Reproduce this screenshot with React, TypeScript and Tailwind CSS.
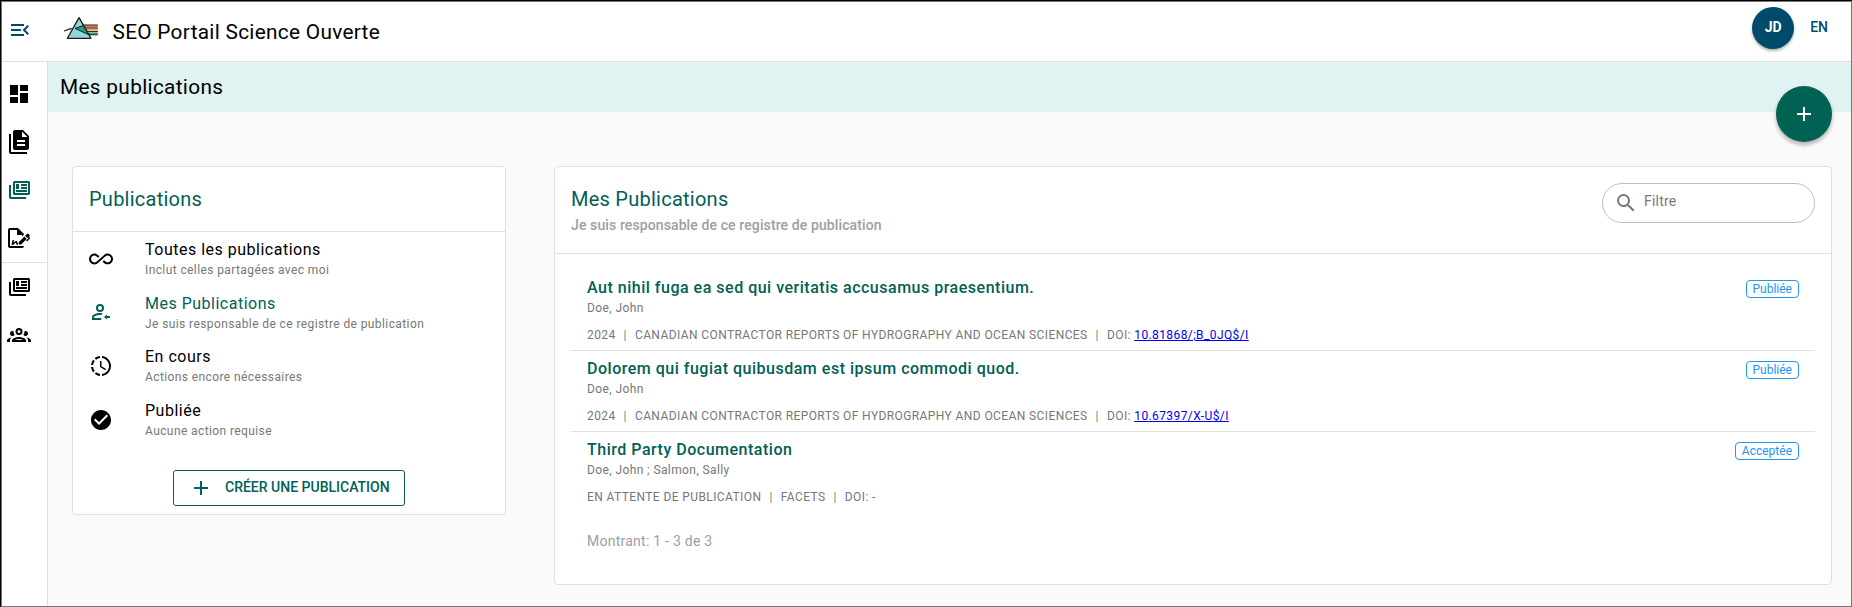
import React from "react";

const ICONS = {
  menuOpen: "M21,15.61L19.59,17L14.58,12L19.59,7L21,8.39L17.44,12L21,15.61M3,6H16V8H3V6M3,13V11H13V13H3M3,18V16H16V18H3Z",
  dashboard: "M13,3V9H21V3M13,21H21V11H13M3,21H11V15H3M3,13H11V3H3V13Z",
  documents: "M16 0H8C6.9 0 6 .9 6 2V18C6 19.1 6.9 20 8 20H20C21.1 20 22 19.1 22 18V6L16 0M18 16H10V14H18V16M18 12H10V10H18V12M15 7V1.5L20.5 7H15M4 4V22H20V24H4C2.9 24 2 23.1 2 22V4H4Z",
  newspaper: "M4 7V19H19V21H4C2 21 2 19 2 19V7H4M21 5V15H8V5H21M21.3 3H7.7C6.76 3 6 3.7 6 4.55V15.45C6 16.31 6.76 17 7.7 17H21.3C22.24 17 23 16.31 23 15.45V4.55C23 3.7 22.24 3 21.3 3M9 6H12V11H9V6M20 14H9V12H20V14M20 8H14V6H20V8M20 11H14V9H20V11Z",
  sign: "M19.7 12.9L14 18.6H11.7V16.3L17.4 10.6L19.7 12.9M23.1 12.1C23.1 12.4 22.8 12.7 22.5 13L20 15.5L19.1 14.6L21.7 12L21.1 11.4L20.4 12.1L18.1 9.8L20.3 7.7C20.5 7.5 20.9 7.5 21.2 7.7L22.6 9.1C22.8 9.3 22.8 9.7 22.6 10C22.4 10.2 22.2 10.4 22.2 10.6C22.2 10.8 22.4 11 22.6 11.2C22.9 11.5 23.2 11.8 23.1 12.1M3 20V4H10V9H15V10.5L17 8.5V8L11 2H3C1.9 2 1 2.9 1 4V20C1 21.1 1.9 22 3 22H15C16.1 22 17 21.1 17 20H3M11 17.1C10.8 17.1 10.6 17.2 10.5 17.2L10 15H8.5L6.4 16.7L7 14H5.5L4.5 19H6L8.9 16.4L9.5 18.7H10.5L11 18.6V17.1Z",
  group: "M12,5A3.5,3.5 0 0,0 8.5,8.5A3.5,3.5 0 0,0 12,12A3.5,3.5 0 0,0 15.5,8.5A3.5,3.5 0 0,0 12,5M12,7A1.5,1.5 0 0,1 13.5,8.5A1.5,1.5 0 0,1 12,10A1.5,1.5 0 0,1 10.5,8.5A1.5,1.5 0 0,1 12,7M5.5,8A2.5,2.5 0 0,0 3,10.5C3,11.44 3.53,12.25 4.29,12.68C4.65,12.88 5.06,13 5.5,13C5.94,13 6.35,12.88 6.71,12.68C7.08,12.47 7.39,12.17 7.62,11.81C6.89,10.86 6.5,9.7 6.5,8.5C6.5,8.41 6.5,8.31 6.5,8.22C6.2,8.08 5.86,8 5.5,8M18.5,8C18.14,8 17.8,8.08 17.5,8.22C17.5,8.31 17.5,8.41 17.5,8.5C17.5,9.7 17.11,10.86 16.38,11.81C16.5,12 16.63,12.15 16.78,12.3C16.94,12.45 17.1,12.58 17.29,12.68C17.65,12.88 18.06,13 18.5,13C18.94,13 19.35,12.88 19.71,12.68C20.47,12.25 21,11.44 21,10.5A2.5,2.5 0 0,0 18.5,8M12,14C9.66,14 5,15.17 5,17.5V19H19V17.5C19,15.17 14.34,14 12,14M4.71,14.55C2.78,14.78 0,15.76 0,17.5V19H3V17.07C3,16.06 3.69,15.22 4.71,14.55M19.29,14.55C20.31,15.22 21,16.06 21,17.07V19H24V17.5C24,15.76 21.22,14.78 19.29,14.55M12,16C13.53,16 15.24,16.5 16.23,17H7.77C8.76,16.5 10.47,16 12,16Z",
  infinity: "M18.6 6.62c-1.44 0-2.8.56-3.77 1.53L12 10.66 10.48 12h.01L7.8 14.39c-.64.64-1.49.99-2.4.99-1.87 0-3.39-1.51-3.39-3.38S3.53 8.62 5.4 8.62c.91 0 1.76.35 2.44 1.03l1.13 1 1.51-1.34L9.22 8.2C8.2 7.18 6.84 6.62 5.4 6.62 2.42 6.62 0 9.04 0 12s2.42 5.38 5.4 5.38c1.44 0 2.8-.56 3.77-1.53l2.83-2.5.01.01L13.52 12h-.01l2.69-2.39c.64-.64 1.49-.99 2.4-.99 1.87 0 3.39 1.51 3.39 3.38s-1.52 3.38-3.39 3.38c-.9 0-1.76-.35-2.44-1.03l-1.14-1.01-1.51 1.34 1.27 1.12c1.02 1.01 2.37 1.57 3.82 1.57 2.98 0 5.4-2.41 5.4-5.38s-2.42-5.37-5.4-5.37z",
  mine: "M11 4A4 4 0 0 0 7 8A4 4 0 0 0 11 12A4 4 0 0 0 15 8A4 4 0 0 0 11 4M11 6A2 2 0 0 1 13 8A2 2 0 0 1 11 10A2 2 0 0 1 9 8A2 2 0 0 1 11 6M11 13C8.33 13 3 14.33 3 17V20H12.5C12.2 19.4 12.1 18.75 12 18.1H4.9V17C4.9 16.36 8 14.9 11 14.9C11.5 14.9 12 14.95 12.5 15.03C12.8 14.4 13.1 13.85 13.6 13.34C12.6 13.1 11.7 13 11 13M18 14.5L15 17L18 19.5V18H21V16H18V14.5Z",
  clock: "M13,2.03V2.05L13,4.05C17.39,4.59 20.5,8.58 19.96,12.97C19.5,16.61 16.64,19.5 13,19.93V21.93C18.5,21.38 22.5,16.5 21.95,11C21.5,6.25 17.73,2.5 13,2.03M11,2.06C9.05,2.25 7.19,3 5.67,4.26L7.1,5.74C8.22,4.84 9.57,4.26 11,4.06V2.06M4.26,5.67C3,7.19 2.25,9.04 2.05,11H4.05C4.24,9.58 4.8,8.23 5.69,7.1L4.26,5.67M2.06,13C2.26,14.96 3.03,16.81 4.27,18.33L5.69,16.9C4.81,15.77 4.24,14.42 4.06,13H2.06M7.1,18.37L5.67,19.74C7.18,21 9.04,21.79 11,22V20C9.58,19.82 8.23,19.25 7.1,18.37M12.5,7V12.25L17,14.92L16.25,16.15L11,13V7H12.5Z",
  check: "M12 2C6.5 2 2 6.5 2 12S6.5 22 12 22 22 17.5 22 12 17.5 2 12 2M10 17L5 12L6.41 10.59L10 14.17L17.59 6.58L19 8L10 17Z",
  plus: "M19,13H13V19H11V13H5V11H11V5H13V11H19V13Z",
  magnify: "M9.5,3A6.5,6.5 0 0,1 16,9.5C16,11.11 15.41,12.59 14.44,13.73L14.71,14H15.5L20.5,19L19,20.5L14,15.5V14.71L13.73,14.44C12.59,15.41 11.11,16 9.5,16A6.5,6.5 0 0,1 3,9.5A6.5,6.5 0 0,1 9.5,3M9.5,5C7,5 5,7 5,9.5C5,12 7,14 9.5,14C12,14 14,12 14,9.5C14,7 12,5 9.5,5Z",
};

function Icon({ name, className = "" }: { name: keyof typeof ICONS; className?: string }) {
  return (
    <svg viewBox="0 0 24 24" className={`shrink-0 fill-current ${className}`}>
      <path d={ICONS[name]} />
    </svg>
  );
}

function Logo() {
  return (
    <svg viewBox="0 0 36 24" className="h-6 w-9 shrink-0">
      <path d="M20 9.2H34.8V11.6H22Z" fill="#e8734a" />
      <path d="M22 12.2H34.8V14.6H24Z" fill="#f2a65e" />
      <path d="M24 15H34.8V16.6H25Z" fill="#f3dcae" />
      <path d="M25 16.6H34.8V18.6H26Z" fill="#1f9d84" />
      <path d="M19 9H34.8M22 12H34.8M24 15.4H34.8M26 18.8H34.8" stroke="#1a1a1a" strokeWidth="1" fill="none" />
      <path d="M16 1.6L28 22.3H4.4Z" fill="#8fd6dc" stroke="#1a1a1a" strokeWidth="1.3" strokeLinejoin="round" />
      <path d="M12 12.4L20.3 9.6L25.6 18.6Z" fill="#1fa08a" stroke="#1a1a1a" strokeWidth="1" />
      <path d="M1 15L8.6 12.4" stroke="#1a1a1a" strokeWidth="1.2" />
    </svg>
  );
}

const FILTERS: { icon: keyof typeof ICONS; title: string; note: string; active?: boolean }[] = [
  { icon: "infinity", title: "Toutes les publications", note: "Inclut celles partagées avec moi" },
  { icon: "mine", title: "Mes Publications", note: "Je suis responsable de ce registre de publication", active: true },
  { icon: "clock", title: "En cours", note: "Actions encore nécessaires" },
  { icon: "check", title: "Publiée", note: "Aucune action requise" },
];

const SERIES = "CANADIAN CONTRACTOR REPORTS OF HYDROGRAPHY AND OCEAN SCIENCES";
const PUBLICATIONS = [
  { title: "Aut nihil fuga ea sed qui veritatis accusamus praesentium.", authors: "Doe, John", year: "2024", series: SERIES, doi: "10.81868/;B_0JQ$/I", status: "Publiée" },
  { title: "Dolorem qui fugiat quibusdam est ipsum commodi quod.", authors: "Doe, John", year: "2024", series: SERIES, doi: "10.67397/X-U$/I", status: "Publiée" },
  { title: "Third Party Documentation", authors: "Doe, John ; Salmon, Sally", year: "EN ATTENTE DE PUBLICATION", series: "FACETS", doi: "", status: "Acceptée" },
];

function NavItem({ name, active }: { name: keyof typeof ICONS; active?: boolean }) {
  return (
    <a className={`flex h-12 items-center pl-[5px] ${active ? "text-[#006057]" : "text-black"}`}>
      <Icon name={name} className="size-6" />
    </a>
  );
}

export default function App() {
  return (
    <div className="h-[607px] w-full border-t border-l border-black">
      <div className="flex h-[606px] flex-col overflow-hidden border border-[#777] bg-[#fafafa] font-['Roboto',sans-serif] text-black">
        <header className="flex h-[60px] shrink-0 items-start border-b border-[#e0e0e0] bg-white">
          <Icon name="menuOpen" className="mt-4 ml-[6px] size-6 text-[#004b69]" />
          <div className="mt-[14px] ml-[31px]">
            <Logo />
          </div>
          <h1 className="mt-[14px] ml-[13.5px] text-[20.8px] leading-8 tracking-[0.3px]">SEO Portail Science Ouverte</h1>
          <div className="mt-[5px] mr-4 ml-auto flex size-[42px] items-center justify-center rounded-full bg-[#004b69] pb-[2px] text-[14px] font-bold text-white shadow-[0_2px_3px_rgba(0,0,0,0.3)]">JD</div>
          <span className="mt-[15px] mr-[23px] text-[14px] leading-5 font-medium text-[#004b69]">EN</span>
        </header>

        <div className="flex min-h-0 flex-1">
          <nav className="w-[46px] shrink-0 border-r border-[#e0e0e0] bg-white pt-2">
            <NavItem name="dashboard" />
            <NavItem name="documents" />
            <NavItem name="newspaper" active />
            <NavItem name="sign" />
            <div className="h-px bg-[#e0e0e0]" />
            <NavItem name="newspaper" />
            <NavItem name="group" />
          </nav>

          <main className="relative flex-1">
            <div className="flex h-[50px] items-center bg-[#e0f2f1] pl-3">
              <h2 className="text-[20.8px] leading-8 tracking-[0.32px]">Mes publications</h2>
            </div>
            <button className="absolute top-6 right-[19px] flex size-14 items-center justify-center rounded-full bg-[#006252] text-white shadow-[0_3px_4px_rgba(0,0,0,0.3)]">
              <Icon name="plus" className="size-6" />
            </button>

            <div className="flex items-start gap-12 pt-[54px] pr-[19px] pl-6">
              <section className="h-[349px] w-[434px] shrink-0 rounded border border-[#e0e0e0] bg-white">
                <div className="h-[65px] border-b border-[#e0e0e0] px-4 pt-4">
                  <h3 className="text-[20px] leading-8 tracking-[0.25px] text-[#006057]">Publications</h3>
                </div>
                <ul>
                  {FILTERS.map((f) => (
                    <li key={f.title} className="flex h-[53.6px] items-center pl-4">
                      <Icon name={f.icon} className={f.active ? "size-6 text-[#006057]" : "size-6"} />
                      <div className="ml-8 pt-[2.4px]">
                        <p className={`text-[16px] leading-[19px] tracking-[0.5px] ${f.active ? "text-[#006057]" : ""}`}>{f.title}</p>
                        <p className="mt-[1px] text-[12px] leading-5 tracking-[0.4px] text-[#777]">{f.note}</p>
                      </div>
                    </li>
                  ))}
                </ul>
                <button className="mx-auto mt-[23.6px] flex h-9 w-[232px] items-center rounded-[3px] border border-[#006057] pl-[15px] text-[14px] font-medium text-[#006057]">
                  <Icon name="plus" className="mr-3 size-6" />
                  <span className="pb-px">CRÉER UNE PUBLICATION</span>
                </button>
              </section>

              <section className="h-[419px] flex-1 rounded border border-[#e0e0e0] bg-white">
                <div className="flex h-[87px] justify-between border-b border-[#e0e0e0] px-4 pt-4">
                  <div>
                    <h3 className="text-[20px] leading-8 tracking-[0.25px] text-[#006057]">Mes Publications</h3>
                    <p className="text-[14px] leading-5 font-medium tracking-[0.11px] text-[#9e9e9e]">Je suis responsable de ce registre de publication</p>
                  </div>
                  <label className="flex h-10 w-[213px] rounded-full border border-[#bdbdbd] pl-[11px] text-[#777]">
                    <Icon name="magnify" className="mt-[7px] size-6" />
                    <span className="mt-[7px] ml-[6px] text-[14px] leading-5 tracking-[0.2px]">Filtre</span>
                  </label>
                </div>
                <div className="px-4 pt-4">
                  {PUBLICATIONS.map((p, i) => (
                    <article key={p.title} className={`flex h-[81px] justify-between px-4 ${i < 2 ? "border-b border-[#e0e0e0]" : ""}`}>
                      <div className="pt-[6px]">
                        <h4 className="text-[16px] leading-6 font-medium tracking-[0.51px] text-[#006057]">{p.title}</h4>
                        <p className="text-[12px] leading-4 tracking-[0.4px] text-[#777]">{p.authors}</p>
                        <p className="mt-[11px] text-[12px] leading-4 tracking-[0.4px] whitespace-pre text-[#777]">
                          {p.year}
                          <span className="mx-2">|</span>
                          {p.series}
                          <span className="mx-2">|</span>
                          DOI: {p.doi ? <a className="text-[#0000ee] underline">{p.doi}</a> : "-"}
                        </p>
                      </div>
                      <span className="mt-[10px] h-[18px] rounded border border-[#2196f3] px-[6px] text-[12px] leading-4 text-[#2196f3]">{p.status}</span>
                    </article>
                  ))}
                  <p className="mt-[18px] pl-4 text-[14px] leading-5 tracking-[0.25px] text-[#9e9e9e]">Montrant: 1 - 3 de 3</p>
                </div>
              </section>
            </div>
          </main>
        </div>
      </div>
    </div>
  );
}
